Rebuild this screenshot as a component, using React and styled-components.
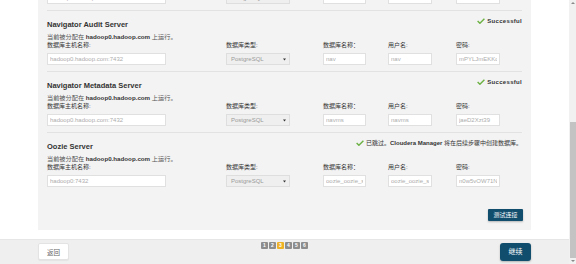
import React, { useLayoutEffect, useRef } from "react";
import styled, { createGlobalStyle } from "styled-components";

const GlobalStyle = createGlobalStyle`
  html, body { margin: 0; padding: 0; overflow: hidden; background: #fff; }
  body { font-family: "Liberation Sans", "Noto Sans CJK SC", Arial, sans-serif; }
  * { box-sizing: border-box; }
`;

const Frame = styled.div`
  display: flex;
  width: 576px;
  height: 264px;
  background: #fff;
`;

const Scroller = styled.div`
  width: 569px;
  height: 264px;
  overflow-y: scroll;
  overflow-x: hidden;
  scrollbar-width: none;
  &::-webkit-scrollbar { display: none; }
`;

const ScrollTrack = styled.div`
  width: 7px;
  height: 264px;
  background: #f1f1f1;
  display: flex;
  flex-direction: column;
  align-items: center;
  justify-content: space-between;
  padding: 2px 0;
`;

const ScrollArrow = styled.span`
  width: 0;
  height: 0;
  border-left: 2px solid transparent;
  border-right: 2px solid transparent;
  ${(p) => (p.$down ? "border-top: 2px solid #8a8a8a;" : "border-bottom: 2px solid #8a8a8a;")}
`;

const ScrollThumb = styled.span`
  width: 6px;
  height: 136px;
  margin-top: auto;
  margin-bottom: 2px;
  background: #c3c3c3;
`;

const Page = styled.div`
  width: 569px;
`;

const PageHeader = styled.header`
  height: 100px;
  padding: 24px 38px 0;
`;

const PageTitle = styled.h2`
  margin: 0 0 8px;
  font-size: 14px;
  line-height: 20px;
  font-weight: normal;
  color: #333;
`;

const Intro = styled.p`
  margin: 0;
  font-size: 7px;
  line-height: 10px;
  color: #555;
`;

const Panel = styled.section`
  margin: 0 38px;
  background: #f3f3f3;
  padding: 7px 9px 9px;
`;

const Section = styled.div`
  padding: 4px 0 6px;
  border-bottom: 1px solid ${(p) => (p.$last ? "transparent" : "#e2e2e2")};
`;

const SectionHead = styled.div`
  display: flex;
  justify-content: space-between;
  align-items: flex-start;
  height: 15px;
`;

const Title = styled.h3`
  margin: 5px 0 0;
  height: 10px;
  font-size: 7.5px;
  line-height: 10px;
  font-weight: bold;
  color: #333;
  white-space: nowrap;
`;

const Status = styled.div`
  display: flex;
  align-items: center;
  gap: 2px;
  margin-top: 1px;
  height: 10px;
  font-size: 6px;
  line-height: 10px;
  color: #333;
  white-space: nowrap;
  font-weight: ${(p) => (p.$bold ? "bold" : "normal")};
  letter-spacing: ${(p) => (p.$bold ? "0.3px" : "0")};
`;

const Assigned = styled.div`
  margin-top: 2px;
  height: 9px;
  font-size: 6.2px;
  line-height: 9px;
  color: #555;
  white-space: nowrap;
  b { color: #333; }
`;

const Fields = styled.div`
  display: grid;
  grid-template-columns: 179px 97px 65px 68px 1fr;
`;

const Field = styled.div`
  display: flex;
  flex-direction: column;
  align-items: flex-start;
`;

const Label = styled.label`
  display: block;
  height: 9px;
  margin-bottom: 3px;
  font-size: 6px;
  line-height: 9px;
  color: #333;
  white-space: nowrap;
`;

const TextInput = styled.input`
  display: block;
  width: ${(p) => p.$w}px;
  height: 12px;
  margin: 0;
  padding: 0 2px;
  border: 1px solid #e0e0e0;
  background: #fff;
  font: 6px "Liberation Sans", sans-serif;
  color: #adadad;
  outline: none;
`;

const SelectBox = styled.div`
  width: 64px;
  height: 12px;
  padding: 0 3px 0 4px;
  border: 1px solid #dedede;
  background: #efefef;
  display: flex;
  align-items: center;
  justify-content: space-between;
  font-size: 6px;
  color: #9a9a9a;
`;

const ButtonRow = styled.div`
  display: flex;
  justify-content: flex-end;
  height: 12px;
  margin-top: 15px;
  margin-right: -1px;
`;

const PrimaryButton = styled.button`
  display: block;
  height: ${(p) => p.$h}px;
  width: ${(p) => p.$w}px;
  padding: 0;
  border: none;
  border-radius: ${(p) => p.$r}px;
  background: #114d6d;
  color: #fff;
  font-family: "Liberation Sans", "Noto Sans CJK SC", sans-serif;
  font-size: ${(p) => p.$fs}px;
  line-height: ${(p) => p.$h}px;
  box-shadow: 0 1px 2px rgba(0, 0, 0, 0.25);
`;

const Footer = styled.footer`
  margin-top: 9px;
  height: 25px;
  background: #efefef;
  border-top: 1px solid #e6e6e6;
  padding: 3px 38px 0;
  display: flex;
  justify-content: space-between;
  align-items: flex-start;
`;

const BackButton = styled.button`
  display: block;
  width: 31px;
  height: 17px;
  padding: 0;
  border: 1px solid #e3e3e3;
  border-radius: 2px;
  background: #fff;
  color: #666;
  font-family: "Liberation Sans", "Noto Sans CJK SC", sans-serif;
  font-size: 6.5px;
  box-shadow: 0 1px 1px rgba(0, 0, 0, 0.05);
`;

const Pager = styled.div`
  display: flex;
  gap: 1px;
  margin-top: -1px;
`;

const PageDot = styled.span`
  width: 7px;
  height: 7px;
  border-radius: 1px;
  background: ${(p) => (p.$active ? "#f0b225" : "#8d8d8d")};
  color: #fff;
  font-size: 5px;
  font-weight: bold;
  line-height: 7px;
  text-align: center;
`;

const Check = () => (
  <svg width="8" height="6" viewBox="0 0 8 6">
    <polyline points="0.6,3.1 2.9,5.3 7.4,0.7" fill="none" stroke="#6db244" strokeWidth="1.4" />
  </svg>
);

const Caret = () => (
  <svg width="3" height="3" viewBox="0 0 3 3">
    <polygon points="0,0.5 3,0.5 1.5,2.5" fill="#333" />
  </svg>
);

const sections = [
  { title: "Hive", host: "hadoop0.hadoop.com:7432", db: "hive", user: "hive", pass: "Qe7LpWz0Ta", status: "ok" },
  { title: "Reports Manager", host: "hadoop0.hadoop.com:7432", db: "rman", user: "rman", pass: "Vb2MoxK9sd", status: "ok" },
  { title: "Navigator Audit Server", host: "hadoop0.hadoop.com:7432", db: "nav", user: "nav", pass: "mPYLJmEKKo", status: "ok" },
  { title: "Navigator Metadata Server", host: "hadoop0.hadoop.com:7432", db: "navms", user: "navms", pass: "jaeD2Xzt39", status: "ok" },
  { title: "Oozie Server", host: "hadoop0:7432", db: "oozie_oozie_server", user: "oozie_oozie_server", pass: "n0w5vOW71N", status: "skip" },
];

function DbSection({ s, last }) {
  return (
    <Section $last={last}>
      <SectionHead>
        <Title>{s.title}</Title>
        {s.status === "ok" ? (
          <Status $bold>
            <Check />
            Successful
          </Status>
        ) : (
          <Status>
            <Check />
            <span>
              已跳过。<b>Cloudera Manager</b> 将在后续步骤中创建数据库。
            </span>
          </Status>
        )}
      </SectionHead>
      <Assigned>
        当前被分配在 <b>hadoop0.hadoop.com</b> 上运行。
      </Assigned>
      <Fields>
        <Field>
          <Label>数据库主机名称:</Label>
          <TextInput $w={119} readOnly value={s.host} />
        </Field>
        <Field>
          <Label>数据库类型:</Label>
          <SelectBox>
            <span>PostgreSQL</span>
            <Caret />
          </SelectBox>
        </Field>
        <Field>
          <Label>数据库名称：</Label>
          <TextInput $w={43} readOnly value={s.db} />
        </Field>
        <Field>
          <Label>用户名:</Label>
          <TextInput $w={44} readOnly value={s.user} />
        </Field>
        <Field>
          <Label>密码:</Label>
          <TextInput $w={44} readOnly value={s.pass} />
        </Field>
      </Fields>
    </Section>
  );
}

export default function App() {
  const ref = useRef(null);
  useLayoutEffect(() => {
    if (ref.current) ref.current.scrollTop = ref.current.scrollHeight;
  }, []);
  return (
    <>
      <GlobalStyle />
      <Frame>
        <Scroller ref={ref}>
          <Page>
            <PageHeader>
              <PageTitle>数据库设置</PageTitle>
              <Intro>配置并测试数据库连接。</Intro>
              <Intro>如果使用自定义数据库，请首先按照相关说明创建数据库。</Intro>
            </PageHeader>
            <Panel>
              {sections.map((s, i) => (
                <DbSection key={s.title} s={s} last={i === sections.length - 1} />
              ))}
              <ButtonRow>
                <PrimaryButton $w={35} $h={12} $r={1} $fs={6}>测试连接</PrimaryButton>
              </ButtonRow>
            </Panel>
            <Footer>
              <BackButton>返回</BackButton>
              <Pager>
                {[1, 2, 3, 4, 5, 6].map((n) => (
                  <PageDot key={n} $active={n === 3}>{n}</PageDot>
                ))}
              </Pager>
              <PrimaryButton $w={31} $h={18} $r={3} $fs={7}>继续</PrimaryButton>
            </Footer>
          </Page>
        </Scroller>
        <ScrollTrack aria-hidden="true">
          <ScrollArrow />
          <ScrollThumb />
          <ScrollArrow $down />
        </ScrollTrack>
      </Frame>
    </>
  );
}
